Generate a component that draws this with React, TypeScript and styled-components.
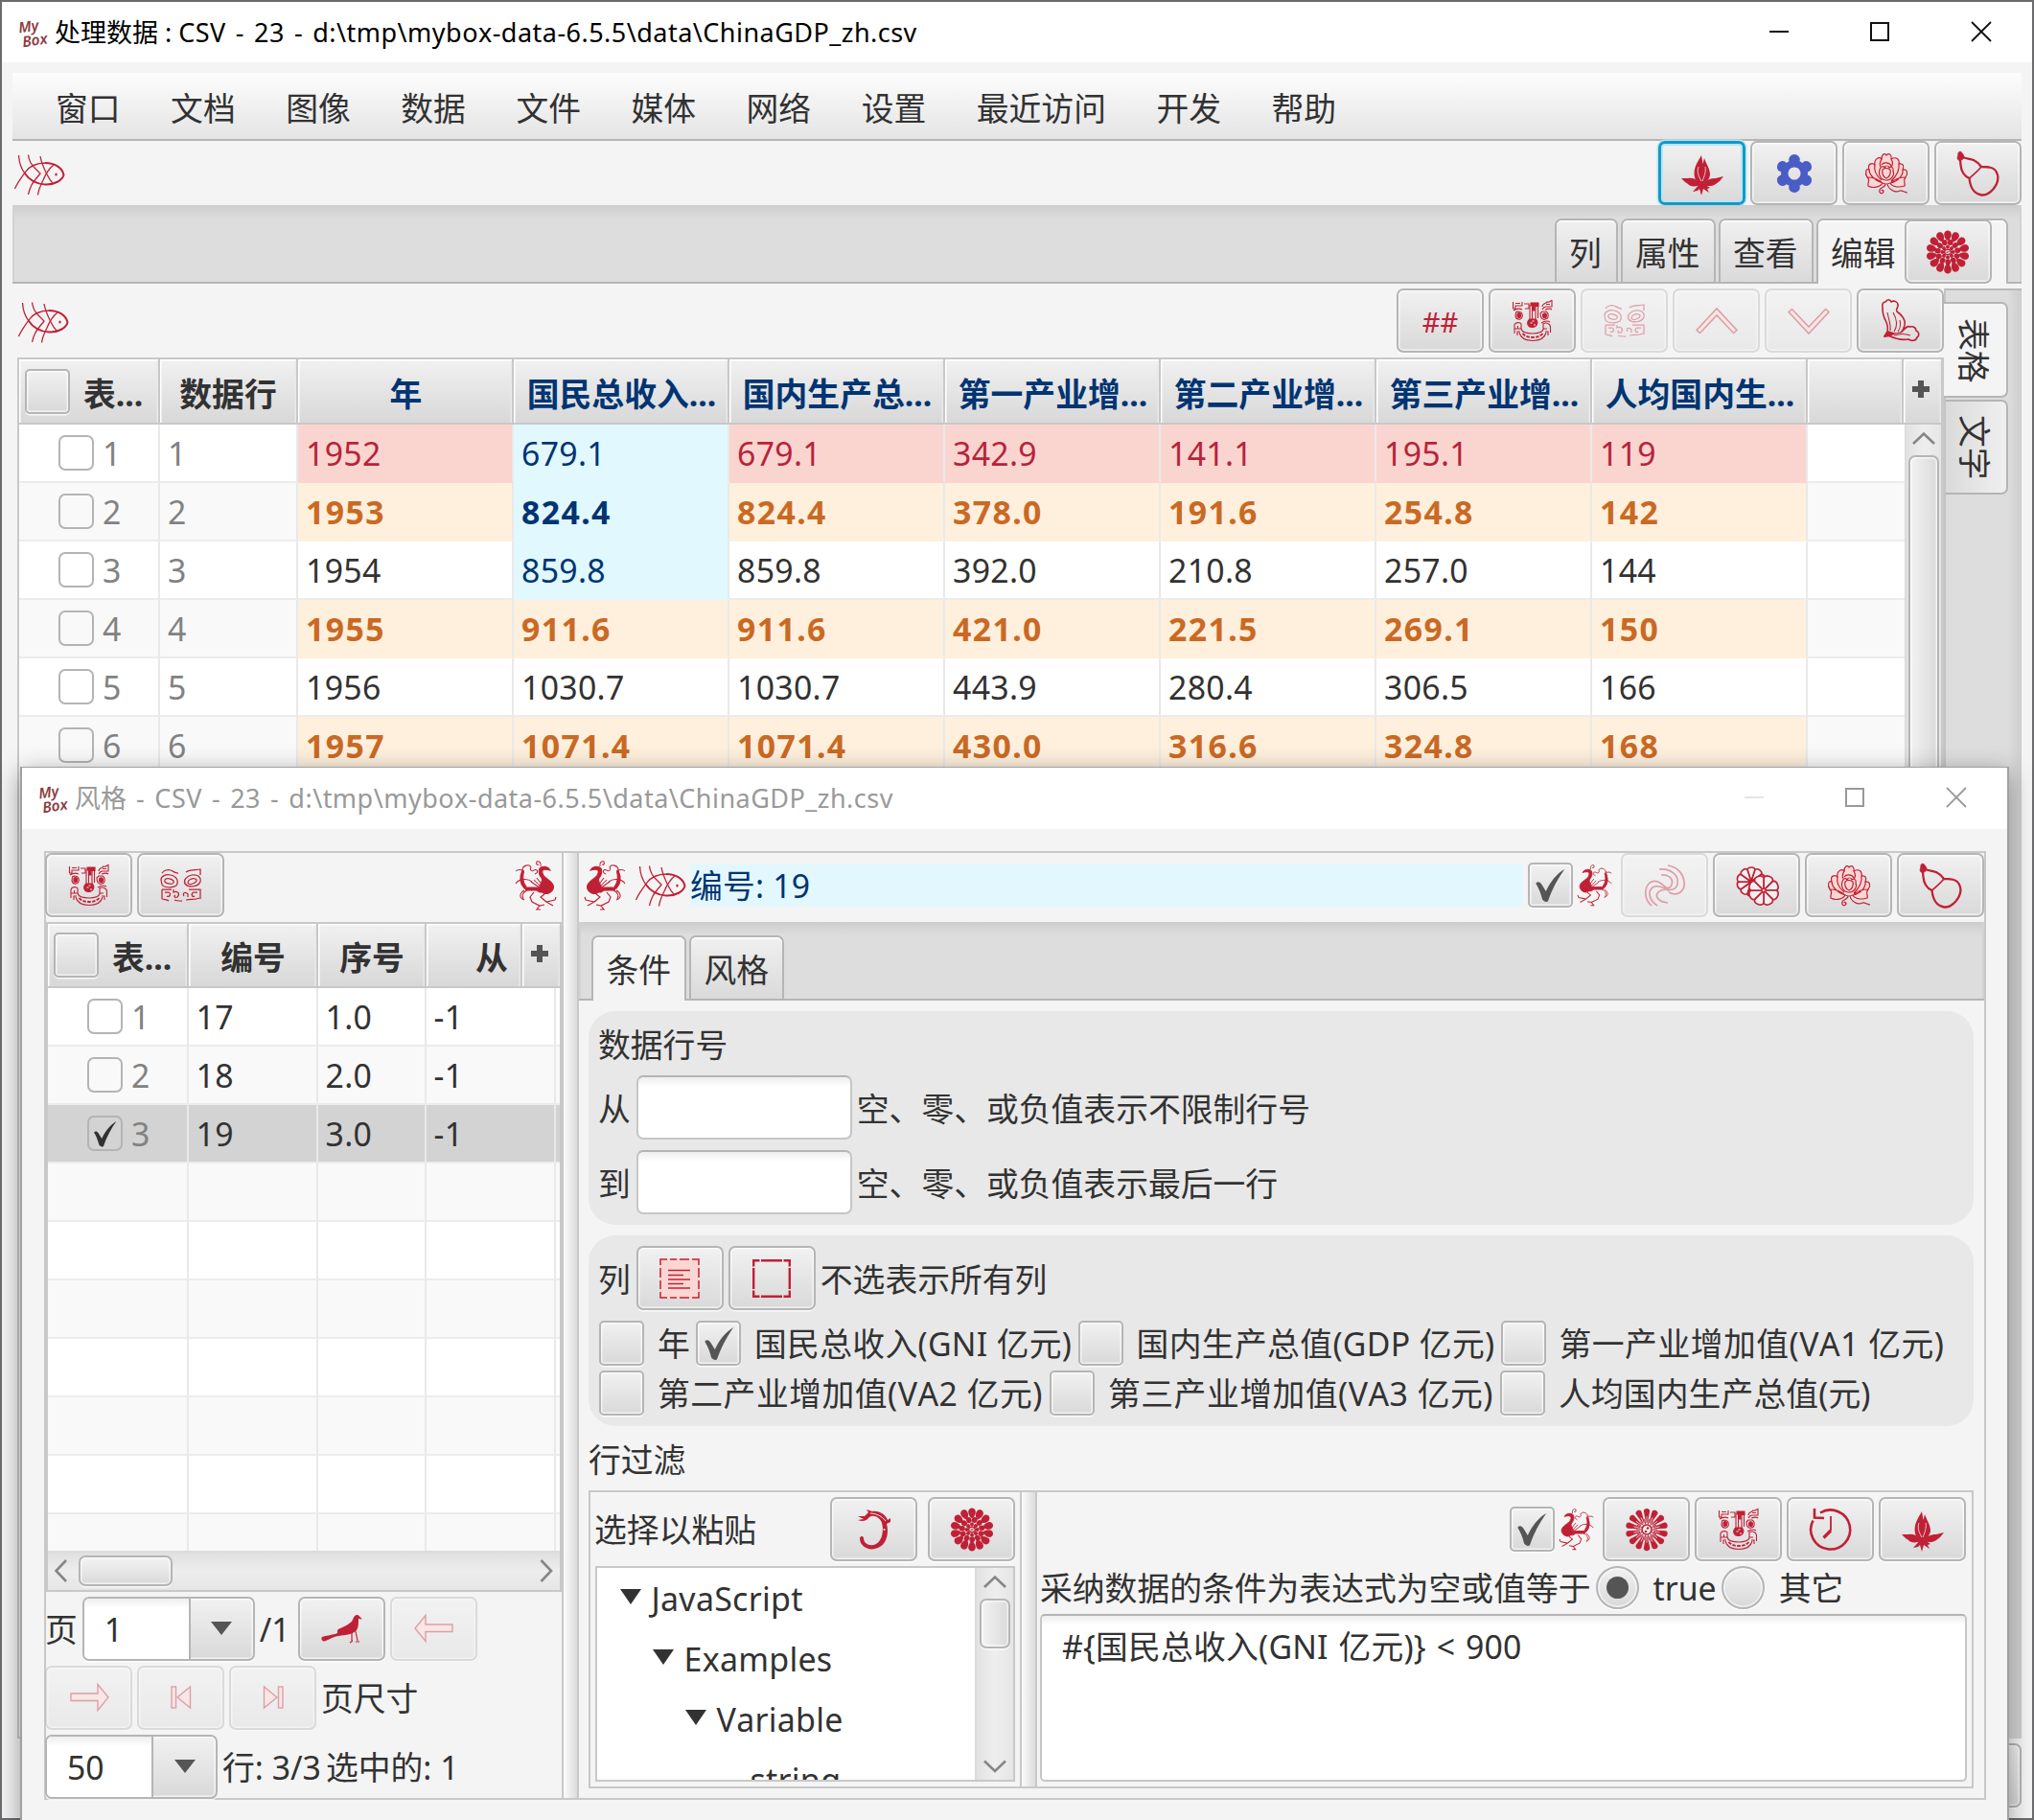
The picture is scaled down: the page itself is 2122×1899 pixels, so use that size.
import React from "react";
import styled, { createGlobalStyle, css } from "styled-components";

const RED = "#c02035";
const PINK = "#fcd6d2";
const INK = "#323232";
const LINE = "#c8c8c8";
const NAVY = "#003472";

const GlobalStyle = createGlobalStyle`
  * { box-sizing: border-box; }
  body {
    margin: 0;
    font-family: "Noto Sans", "Noto Sans CJK SC", sans-serif;
    font-size: 33.8px;
    line-height: 1;
    font-kerning: none;
    color: ${INK};
    white-space: nowrap;
  }
`;

/* ---------- icons ---------- */

const ring = (n: number, f: (angle: number, i: number) => React.ReactNode, start = 0) =>
  Array.from({ length: n }, (_, i) => f(start + (360 / n) * i, i));

const shapes: Record<string, { w: number; h: number; body: React.ReactNode }> = {
  fish: {
    w: 52, h: 43,
    body: (
      <g fill="none" stroke={RED} strokeWidth="1.3">
        <path d="M4.500 1 C5 9 7 15 11 20" />
        <path d="M0.500 36 C3 30 7 25 11 19 C15 13 22 9 33 9" />
        <path d="M10.500 19.500 C15 26 22 31 32 31.500 C42 32 50 27 51.500 21.500 C50 14 42 9 32 9" strokeWidth="2" />
        <path d="M14.500 0.500 C15 6 17 10 21 14 C23 16 25 18 27 20 C24 24 20 28 18 32 C16 36 15 39 14.500 42" />
        <path d="M27 2 C28 8 31 15 34 21 C36 25 38 28 40 30" />
        <path d="M41 11 C36 15 32 22 30 27 C27 33 25 38 24.500 42.500" />
        <ellipse cx="43.500" cy="21" rx="1.200" ry="1.600" fill={RED} stroke="none" />
      </g>
    ),
  },
  leaf: {
    w: 46, h: 46,
    body: (
      <g fill={RED}>
        <path d="M22 4 C18 11 13 18 15 27 C16 31 20 33 22 34 C27 33 31 28 31 24 C31 18 27 13 25 7 L23.500 13 Z" />
        <path d="M1 28 L8 28 C14 27 19 30 22 35 C16 37 10 37 8 34 L5 32 Z" />
        <path d="M45 26 L37 28 C31 28 26 30 23 35 C29 37 35 36 37 34 L41 31 Z" />
        <path d="M22 32 L13 42 L18 41 L20 39 L22 46 L24 39 L30 43 L28 39 L31 38 Z" />
        <path d="M19 16 C17 21 19 26 22 31 M26 16 C27 21 25 26 23 31" fill="none" stroke="#ececec" strokeWidth=".8" />
      </g>
    ),
  },
  gear: {
    w: 40, h: 42,
    body: (
      <g fill="#4a5cc6">
        <path fillRule="evenodd" d="M20 7 a14 14 0 1 0 .01 0 Z M20 14.500 a6.500 6.500 0 1 1 -.01 0 Z" />
        {ring(6, (a) => (
          <ellipse key={a} cx="20" cy="6.500" rx="5.800" ry="5.400" transform={`rotate(${a} 20 21)`} />
        ))}
      </g>
    ),
  },
  lotus: {
    w: 46, h: 46,
    body: (
      <g fill={PINK} stroke={RED} strokeWidth="1.2" strokeLinejoin="round">
        <path d="M3 27 C0 22 2 17 5 19 C3 13 8 11 11 14 C10 8 15 5 18 8 C18 3 21 1 23 4 C26 1 29 4 28 8 C33 5 37 8 36 13 C40 12 42 15 40 19 C45 18 46 23 43 27 C40 30 43 33 42 36 C36 38 29 37 27 33 C25 34 21 34 19 33 C17 37 9 39 4 36 C3 32 7 30 3 27 Z" />
        <path d="M19 33 C10 30 5 24 5 19 M18 30 C11 24 10 18 11 14 M17 16 C15 12 17 10 18 8 M28 31 C35 24 37 19 36 13 M27 33 C36 31 41 24 40 19 M28 16 C31 13 29 10 28 8 M18 32 C13 28 8 27 3 27 M28 32 C33 28 38 27 43 27" fill="none" />
        <path d="M16 19 C17 15 20 15 21 17 C22 14 25 14 26 17 C28 15 31 17 30 20 C32 25 28 30 23 30 C18 30 14 25 16 19 Z" />
        <path d="M19 19 C18 23 20 27 23 28 C26 27 28 23 27 19 C24 17 21 17 19 19 Z M18 14 C20 11 26 11 28 15" />
        <path d="M22 34 C22 37 17 38 16 40 C15 44 19 45 20 42 C20 40 18 40 18 41 M24 34 C25 39 32 44 37 41 C39 40 42 43 45 43" fill="none" />
      </g>
    ),
  },
  gourd: {
    w: 46, h: 46,
    body: (
      <g fill="none" stroke={RED} strokeWidth="2.3" strokeLinejoin="round">
        <path d="M3.500 4 C8 8 13 7 18 9 C22 11 24 13 26 16 C32 16 40 16 42 22 C46 29 41 39 33 44 C28 47 22 45 19 42 C15 38 14 33 13.500 28 C9 26 5 21 4.500 14 Z" />
        <path d="M13.500 28 C17 25 22 21 26 16" strokeWidth="1.700" />
        <path d="M2 4 C1 0 5 -1 6 2 C9 5 8 8 5 9 C2 10 0 8 2 4 Z" fill={RED} strokeWidth="1" />
      </g>
    ),
  },
  mum: {
    w: 46, h: 46,
    body: (
      <g fill={RED}>
        {ring(14, (a) => (
          <path key={`a${a}`} d="M23 11.500 C20 9 18.800 6 19.300 3.500 C20.300 -0.500 25.700 -0.500 26.700 3.500 C27.200 6 26 9 23 11.500 Z" transform={`rotate(${a} 23 23)`} />
        ))}
        {ring(11, (a) => (
          <ellipse key={`b${a}`} cx="23" cy="12.600" rx="2.800" ry="3.100" transform={`rotate(${a} 23 23)`} />
        ), 15)}
        {ring(8, (a) => (
          <ellipse key={`c${a}`} cx="23" cy="17.400" rx="2" ry="2" transform={`rotate(${a} 23 23)`} />
        ))}
        <ellipse cx="23" cy="23" rx="3.400" ry="2.700" fill="none" stroke={RED} strokeWidth="1.400" />
        <path d="M21.500 23.500 L24.500 22.500" stroke={RED} strokeWidth="1.200" />
      </g>
    ),
  },
  taotie: {
    w: 42, h: 43,
    body: (
      <g fill="none" stroke={RED} strokeWidth="1.1">
        <path d="M0.500 2 V9 H3 V6 H10 V2 M3 3.500 H8 M1 11 C4 9 8 9 10 10 M12 4 H17 V9 H13 M31 7 C31 3 35 4 36 2 C38 3 39 1 41 0.500 V7 H35 C33 7 32 8 31 10 M35 4.500 H39 M34 10 C37 9 40 9 41 10" />
        <path d="M18 5 V21 M20.500 6 V20 M24 4 V20 M26.500 5 V19" />
        <path d="M19 3 H27 V6.500 H23 V11 H20.500 V6 H19 Z" fill={RED} />
        <path d="M18 20 C14 23 15.500 28.500 20.500 28.500 C26 28.500 27 23 24.500 20 Z" fill={RED} />
        <path d="M18.500 24 h2 M22 26 h2 M20.500 22 h2" stroke="#eee" />
        <path d="M3.500 13 C5 11.500 9 12 9.800 14 C11 17 10 19.500 8 20 C5 20.500 3.500 19 3 17 Z M29 14 L31 12 H35 C37 13 38 16 36.500 19 L33 20.500 C30 20 29 17 29 14 Z" />
        <ellipse cx="6.800" cy="16" rx="2" ry="2.500" fill={RED} />
        <ellipse cx="33.500" cy="16.200" rx="2" ry="2.500" fill={RED} />
        <path d="M2 35 V26 C3 23 8 23 9 25 V30 H5.500 V27 M2 30 H5 M5 37 V33 H8 M39.500 34 V28 C39 24 34 23 32 25 V30 H36 M39 23 C36 21 33 22 30 24 M37 37 V33 H34" />
        <path d="M9 30 C10 34 15 35 21 35 C27 35 31 34 32.500 30 M7 34 C8.500 40 14 42.500 21 42.500 C28 42.500 33.500 40 35 34" />
        <path d="M10.500 35 C14 38.500 17 39 21 39 C25 39 28 38.500 31.500 35" strokeWidth="1.800" strokeDasharray="3.500 1.400" />
      </g>
    ),
  },
  mask: {
    w: 43, h: 35,
    body: (
      <g fill="none" stroke={RED} strokeWidth="1.25">
        <path d="M2 5 C4 2 8 1 11 2 C14 3 15 5 19 5 M27 4 C31 1 37 2 42 1 V7" />
        <path d="M1 12 C1 8 6 6 11 7 C17 8 20 13 17 18 C12 21 4 20 2 17 Z M26 16 C24 12 28 8 33 7 C39 6 43 9 42 14 C40 19 30 21 26 16 Z" />
        <path d="M5 12 C6 10 11 10 14 13 C15 15 13 17 10 16 C6 16 4 14 5 12 Z M29 15 C29 12 33 10 37 11 C39 12 38 15 34 16 C32 17 30 17 29 15 Z" />
        <path d="M2 22 V32 M2 22 H12 M5 25 H9 C12 26 10 31 7 29 M2 32 C5 33 7 32 9 34 M14 22 V25 C19 23 21 27 18 30 C15 31 14 29 16 28 M15 33 C17 34 21 34 23 34 M25 29 C23 26 26 24 29 27 V30 M30 22 H42 V32 M39 25 H35 C32 26 33 31 36 29 M27 33 C33 32 37 33 41 31" />
      </g>
    ),
  },
  up: {
    w: 46, h: 46,
    body: <path d="M2 32.500 L23 10 L44 32.500 L40.500 35.500 L23 17 L5.500 35.500 Z" fill={PINK} stroke={RED} strokeWidth="1.6" />,
  },
  down: {
    w: 46, h: 46,
    body: <path d="M2 13.500 L23 36 L44 13.500 L40.500 10.500 L23 29 L5.500 10.500 Z" fill={PINK} stroke={RED} strokeWidth="1.6" />,
  },
  butterfly: {
    w: 40, h: 44,
    body: (
      <g fill="none" stroke={RED} strokeWidth="1.6" strokeLinejoin="round">
        <path d="M6 33 C7 29 6 25 4 21 C1 16 1 12 1 8 C0 4 2 2 4 2 C6 -1 9 -1 10 2 C13 0 17 2 17 5 C18 8 14 9 16 12 C20 15 23 18 24 22 C25 26 23 30 21 33 C24 30 27 26 30 28 C33 27 36 29 36 32 C39 33 40 37 37 39 C36 43 31 43 28 41 C22 42 13 40 7 37 L3 38 Z" />
        <path d="M9 32 C10 25 7 19 6 13 M13 33 C17 27 16 20 12 13 M17 33 C20 29 20 25 19 21 M22 33 C18 35 14 35 11 35 M13 37 C19 35 25 35 30 37" strokeWidth="1.1" />
        <path d="M3 38 L7 33 L13 35 L8 37.500 Z" fill={RED} />
      </g>
    ),
  },
  phoenix: {
    w: 42, h: 52,
    body: (
      <g fill="none" stroke={RED} strokeWidth="1.05">
        <path d="M6 10 C8 6 14 5 17 8 C19 12 17 16 14.500 19 C14 22 16 24 17 27 C15 30 14 33 13 34 C8 36 2.500 32 2.500 27 C3 22 9 20 12.500 16 C14 14 15 12 13.500 9.500 C11 9 9 9 6 10 Z" fill={RED} />
        <path d="M14 26 L20 18 M15 28 L23 20 M16 29 L26 22" />
        <path d="M14 28 H33 L31 31 H20 L17 33 H12" fill={RED} />
        <path d="M16 6 C15 2 18 0 20 1 C21 3 20 5 18 4" />
        <path d="M22 14 C17 12 20 8 23 10 C25 12 28 9 26 7 C28 3 35 5 35 10 C39 9 41 10 42 11" />
        <path d="M35 10 C38 17 38 24 33 29 L31 27 C35 22 35 17 33.500 11 Z" fill={RED} />
        <path d="M25 22 C30 18 39 19 42 24 M33 31 C38 34 39 39 33 41 M30 31 C35 33 36 37 34 40" />
        <path d="M12 35 L16 38 L10 43 L1 41 M10 43 L3 47 M1 41 L0 38 M23 33 L27 38 L25 43 L17 47 L12 46 M17 47 L20 51 H16" strokeWidth="1.2" />
      </g>
    ),
  },
  swirl: {
    w: 44, h: 44,
    body: (
      <g fill="none" stroke={RED} strokeWidth="1.7">
        <path d="M25 1 C37 3 43 12 42 23 C40 30 33 33 26 29 M16 5 C28 4 37 11 35 21 C33 26 29 27 25 26 M18 11 C26 10 31 15 29 21 C28 24 26 25 23 24" />
        <path d="M8 43 C0 36 0 25 6 19 C13 14 21 21 26 28 M14 43 C5 37 4 28 9 24 C13 21 18 23 22 25 M25 40 C15 39 11 33 15 29 C18 26 21 26 24 26" />
      </g>
    ),
  },
  twin: {
    w: 44, h: 42,
    body: (
      <g fill="#efefef" stroke={RED} strokeWidth="1.7">
        {ring(10, (a) => (
          <path key={`a${a}`} d="M16 17 L12 5 C12 1 20 1 20 5 Z" transform={`rotate(${a} 16 17)`} />
        ))}
        <circle cx="29" cy="26" r="14" stroke="none" />
        {ring(8, (a) => (
          <path key={`b${a}`} d="M29 26 L24 14 C24 9 34 9 34 14 Z" transform={`rotate(${a + 22.5} 29 26)`} />
        ))}
        <circle cx="29" cy="26" r="1.800" fill={PINK} strokeWidth="1" />
      </g>
    ),
  },
  selectAll: {
    w: 42, h: 42,
    body: (
      <g stroke={RED} strokeWidth="1.4">
        <path d="M0 0 H42 V42 H0 Z" fill={PINK} stroke="none" />
        <path d="M1 7 V1 H8 M11 1 H18 M21 1 H31 M34 1 H41 V7 M41 10 V20 M41 23 V32 M41 35 V41 H34 M31 41 H21 M18 41 H11 M8 41 H1 V35 M1 32 V23 M1 20 V10" fill="none" strokeWidth="1.5" />
        <path d="M9 12.500 H32 M9 17.500 H25 M9 22 H32 M9 26.500 H25 M9 31 H32" fill="none" />
      </g>
    ),
  },
  selectNone: {
    w: 40, h: 40,
    body: (
      <g fill="none" stroke={RED} strokeWidth="2.4">
        <path d="M1.200 7.500 V1.200 H7.500 M9 1.200 H31 M32.500 1.200 H38.800 V7.500 M38.800 9 V31 M38.800 32.500 V38.800 H32.500 M31 38.800 H9 M7.500 38.800 H1.200 V32.500 M1.200 31 V9" />
      </g>
    ),
  },
  bird: {
    w: 44, h: 31,
    body: (
      <g fill={RED}>
        <path d="M1 24 C8 22 12 22 17 20 C17 17 17 16 20 15 C26 12 31 10 33 6 C34 2 37 0 39 1.500 L43 5.500 L39 5 C39 9 39 14 37 17 C34 21 26 22 18 23 C11 24 7 28 3 28.500 C0 28 0 25 1 24 Z" />
        <path d="M32 19 V28 M36 18 L38 28 M30 30 L33 28 M36 29 H40" stroke={RED} strokeWidth="1.2" fill="none" />
      </g>
    ),
  },
  left: {
    w: 42, h: 30,
    body: <path d="M1 15 L12 1.500 V11 H40 V18.500 H12 V28.500 Z" fill={PINK} stroke={RED} strokeWidth="1.4" />,
  },
  right: {
    w: 42, h: 30,
    body: <path d="M41 15 L30 1.500 V11 H2 V18.500 H30 V28.500 Z" fill={PINK} stroke={RED} strokeWidth="1.4" />,
  },
  first: {
    w: 22, h: 24,
    body: (
      <g fill={PINK} stroke={RED} strokeWidth="1.4">
        <rect x="1" y="1" width="4.500" height="22" />
        <path d="M20.500 1 V23 L7 12 Z" />
      </g>
    ),
  },
  last: {
    w: 22, h: 24,
    body: (
      <g fill={PINK} stroke={RED} strokeWidth="1.4">
        <rect x="16.500" y="1" width="4.500" height="22" />
        <path d="M1.500 1 V23 L15 12 Z" />
      </g>
    ),
  },
  dragon: {
    w: 36, h: 43,
    body: (
      <g fill={RED}>
        <path d="M1 12 L7 11 L1 8 L8 8 L12 4 L10 1 L16 3 C24 2 30 7 32 12 L35 10 V14 L31 16 C34 27 30 38 22 41 C13 45 3 40 3 31 C4 28 7 29 7 31 C7 37 14 40 20 37 C27 33 28 22 26 15 C24 9 17 6 13 9 C10 13 6 14 1 12 Z" />
        <path d="M14 5 C20 5 26 8 30 13" fill="none" stroke="#eee" strokeWidth="1" />
        <circle cx="28.500" cy="22" r="1" fill="#eee" />
      </g>
    ),
  },
  daisy: {
    w: 46, h: 46,
    body: (
      <g fill={RED}>
        {ring(14, (a) => (
          <g key={a} transform={`rotate(${a} 23 23)`}>
            <path d="M22 15.500 L19.800 3.500 C20 0 26 0 26.200 3.500 L24 15.500 Z" />
            <path d="M23 15 V9" stroke="#eee" strokeWidth=".7" />
          </g>
        ))}
        {ring(14, (a) => (
          <path key={`s${a}`} d="M23 17.500 V12" stroke={RED} strokeWidth=".9" transform={`rotate(${a} 23 23)`} />
        ), 12.86)}
        <circle cx="23" cy="23" r="5" fill="#eee" stroke={RED} strokeWidth="1.6" />
        <circle cx="24" cy="21.500" r="1.300" />
        <circle cx="22" cy="25" r="1.300" />
      </g>
    ),
  },
  history: {
    w: 46, h: 46,
    body: (
      <g fill="none" stroke={RED} strokeWidth="2.600">
        <path d="M4.500 13.500 A20.500 20.500 0 1 0 12 5.500" />
        <path d="M6 1 V10.500 L16 11" />
        <path d="M23 9 V24" strokeWidth="1.800" />
        <path d="M23 24 L15.500 31.500" strokeWidth="3.200" />
      </g>
    ),
  },
};

const Drawing = styled.svg`
  display: block;
  flex: none;
  overflow: visible;
`;

const Icon = ({ name, scale = 1, flip }: { name: string; scale?: number; flip?: boolean }) => {
  const s = shapes[name];
  return (
    <Drawing width={s.w * scale} height={s.h * scale} viewBox={`0 0 ${s.w} ${s.h}`} preserveAspectRatio="none">
      {flip ? <g transform={`translate(${s.w} 0) scale(-1 1)`}>{s.body}</g> : s.body}
    </Drawing>
  );
};

/* ---------- shared controls ---------- */

const raised = css`
  background: linear-gradient(#f1f1f1, #d9d9d9);
  border: 2px solid #b5b5b5;
  border-radius: 7px;
  box-shadow: inset 0 0 0 1.5px rgba(255, 255, 255, 0.65), 0 1.5px 0 rgba(255, 255, 255, 0.8);
`;

const ToolButton = styled.button<{ $focus?: boolean }>`
  ${raised}
  flex: none;
  display: flex;
  align-items: center;
  justify-content: center;
  width: 91px;
  height: 67px;
  padding: 0;
  font: inherit;
  color: ${RED};
  &:disabled { opacity: 0.4; }
  ${(p) =>
    p.$focus &&
    css`
      border: 3px solid #1399c6;
      box-shadow: inset 0 0 0 2px #b9e6f2, 0 0 0 1.5px #b9e6f2;
    `}
`;

const HashLabel = styled.span`
  padding-top: 1px;
  font-size: 29px;
`;

const Tool = ({ icon, disabled, focus }: { icon: string; disabled?: boolean; focus?: boolean }) => (
  <ToolButton disabled={disabled} $focus={focus}>
    <Icon name={icon} />
  </ToolButton>
);

const Caption = styled.span<{ $after?: number }>`
  flex: none;
  padding-top: 3px;
  padding-right: ${(p) => p.$after ?? 0}px;
`;

const Box = styled.span`
  ${raised}
  border-radius: 5px;
  flex: none;
  display: flex;
  align-items: center;
  justify-content: center;
  width: 47px;
  height: 47px;
`;

const CellBox = styled.span`
  flex: none;
  display: flex;
  align-items: center;
  justify-content: center;
  width: 37px;
  height: 37px;
  margin-top: -3px;
  border: 2px solid #b4b4b4;
  border-radius: 7px;
`;

const Tick = ({ size = 32, color = "#555" }: { size?: number; color?: string }) => (
  <Drawing width={size} height={size * 1.05} viewBox="0 0 30 32">
    <path d="M1 14 C4 11 6 13 11 22 C15 13 22 4 29.500 0 C23 9 17 20 13 32 C11 33 9 32 7.500 30 C6 24 4 19 1 14 Z" fill={color} />
  </Drawing>
);

const Check = ({ on }: { on?: boolean }) => <Box>{on && <Tick />}</Box>;

const Radio = styled.span<{ $on?: boolean }>`
  ${raised}
  flex: none;
  width: 45px;
  height: 45px;
  border-radius: 50%;
  display: flex;
  align-items: center;
  justify-content: center;
  &::after {
    content: "";
    width: 23px;
    height: 23px;
    border-radius: 50%;
    background: ${(p) => (p.$on ? "#555" : "transparent")};
  }
`;

/* ---------- windows ---------- */

const Desktop = styled.div`
  position: relative;
  width: 2122px;
  height: 1899px;
  padding: 2px;
  overflow: hidden;
  background: #6b6a6c;
`;

const MainWindow = styled.div`
  display: flex;
  flex-direction: column;
  height: 1895px;
  background: #f4f4f4;
`;

const DialogWindow = styled.div`
  position: absolute;
  left: 21px;
  top: 800px;
  width: 2075px;
  height: 1110px;
  display: flex;
  flex-direction: column;
  border: 2px solid #a0a0a0;
  border-top-width: 1px;
  background: #f4f4f4;
  box-shadow: 0 6px 24px rgba(0, 0, 0, 0.38);
`;

const TitleBar = styled.div<{ $inactive?: boolean }>`
  flex: none;
  display: flex;
  align-items: center;
  height: ${(p) => (p.$inactive ? 64 : 63)}px;
  padding-left: 18px;
  background: #fff;
  font-size: 27px;
  color: ${(p) => (p.$inactive ? "#999" : "#000")};
`;

const Logo = styled.span`
  flex: none;
  display: flex;
  flex-direction: column;
  width: 37px;
  font: italic 600 15.5px/15px "Noto Sans", sans-serif;
  color: #8d3b40;
  transform: rotate(-8deg);
  & > span + span { padding-left: 2px; }
`;

const TitleText = styled.span`
  flex: 1;
  display: flex;
  white-space: pre;
  padding-bottom: 1px;
`;

const TitlePath = styled.span`
  letter-spacing: 0.47px;
  word-spacing: 2.6px;
`;

const WindowButton = styled.span`
  width: 106px;
  display: flex;
  justify-content: center;
`;

const WindowButtons = ({ color, minColor }: { color: string; minColor: string }) => (
  <>
    <WindowButton>
      <Drawing width="20" height="20" viewBox="0 0 20 20"><path d="M1 9 H21" stroke={minColor} strokeWidth="2" /></Drawing>
    </WindowButton>
    <WindowButton>
      <Drawing width="20" height="20" viewBox="0 0 20 20"><rect x="1" y="0" width="18" height="18" fill="none" stroke={color} strokeWidth="2" /></Drawing>
    </WindowButton>
    <WindowButton>
      <Drawing width="20" height="20" viewBox="0 0 20 20"><path d="M0 -1 L20 19 M20 -1 L0 19" stroke={color} strokeWidth="1.8" /></Drawing>
    </WindowButton>
  </>
);

const MainBody = styled.div`
  flex: 1;
  min-height: 0;
  display: flex;
  flex-direction: column;
  padding: 11px 11px 11px 11px;
`;

const MenuBar = styled.div`
  flex: none;
  display: flex;
  align-items: center;
  gap: 52.5px;
  height: 71px;
  padding: 6px 0 0 45px;
  border-bottom: 2px solid #b5b5b5;
  background: linear-gradient(#fdfdfd, #e4e4e4);
`;

const ToolRow = styled.div<{ $h: number; $top: number; $left: number }>`
  flex: none;
  display: flex;
  align-items: flex-start;
  gap: 5px;
  height: ${(p) => p.$h}px;
  padding-top: ${(p) => p.$top}px;
  padding-left: ${(p) => p.$left}px;
`;

const StyleTools = styled(ToolRow)`
  margin-left: -1px;
`;

const Spacer = styled.span`
  flex: 1;
`;

const Gap = styled.span<{ $w: number }>`
  flex: none;
  width: ${(p) => p.$w}px;
`;

const Drop = styled.span<{ $y: number }>`
  flex: none;
  margin-top: ${(p) => p.$y}px;
`;

const TabStrip = styled.div<{ $end?: boolean }>`
  flex: none;
  display: flex;
  align-items: flex-end;
  justify-content: ${(p) => (p.$end ? "flex-end" : "flex-start")};
  gap: 3px;
  height: 82px;
  padding: 0 14.5px 0 13px;
  border-bottom: 2px solid #b5b5b5;
  background: linear-gradient(#cdcdcd, #ddd 14px);
  box-shadow: inset 2px 0 0 #d2d2d2, inset -2px 0 0 #d2d2d2;
`;

const Tab = styled.div<{ $w: number; $active?: boolean }>`
  display: flex;
  align-items: center;
  width: ${(p) => p.$w}px;
  height: ${(p) => (p.$active ? 68 : 66)}px;
  margin-bottom: ${(p) => (p.$active ? -2 : 0)}px;
  padding: ${(p) => (p.$active ? 3 : 5)}px 0 0 13.5px;
  border: 2px solid #b5b5b5;
  border-bottom: 0;
  border-radius: 7px 7px 0 0;
  background: ${(p) => (p.$active ? "#f4f4f4" : "linear-gradient(#f0f0f0, #dadada)")};
  box-shadow: inset 0 1.5px 0 #fff;
`;

const TabAction = styled.div`
  flex: none;
  margin: -4px 0 0 9px;
`;

const Columns = styled.div`
  flex: none;
  display: flex;
  height: 1518px;
`;

const MainPane = styled.div`
  width: 2015px;
  display: flex;
  flex-direction: column;
`;

const SideTabs = styled.div`
  flex: 1;
  display: flex;
  flex-direction: column;
  gap: 2px;
  margin-top: 5px;
  padding: 12px 14px 0 0;
  border-top: 2px solid #b9b9b9;
  border-left: 2px solid #c4c4c4;
  background: linear-gradient(to left, #cdcdcd, #ddd 14px);
`;

const SideTab = styled.div<{ $active?: boolean }>`
  height: 99.500px;
  margin-left: ${(p) => (p.$active ? -2 : 0)}px;
  padding: 2px 4px 0 0;
  display: flex;
  align-items: center;
  justify-content: center;
  writing-mode: vertical-rl;
  text-orientation: sideways;
  border: 2px solid #b5b5b5;
  border-left: 0;
  border-radius: 0 7px 7px 0;
  background: ${(p) => (p.$active ? "#f4f4f4" : "linear-gradient(to left, #f0f0f0, #dadada)")};
`;

/* ---------- tables ---------- */

const Table = styled.div<{ $edge: number }>`
  display: flex;
  flex-direction: column;
  border: 2px solid ${LINE};
  border-right-width: ${(p) => p.$edge}px;
  background: #fff;
`;

const HeadRow = styled.div<{ $h: number }>`
  flex: none;
  display: flex;
  height: ${(p) => p.$h}px;
  border-bottom: 2px solid ${LINE};
  background: linear-gradient(#f1f1f1, #d8d8d8);
`;

const HeadCell = styled.div<{ $w: number; $navy?: boolean; $shift?: number }>`
  flex: none;
  display: flex;
  align-items: center;
  justify-content: center;
  overflow: hidden;
  width: ${(p) => p.$w}px;
  padding: 7px 0 0 ${(p) => p.$shift ?? 2}px;
  border-right: 2px solid ${LINE};
  box-shadow: inset 1.5px 1.5px 0 #fff, inset -1.5px 0 0 #e9e9e9;
  font-weight: 700;
  color: ${(p) => (p.$navy ? NAVY : INK)};
`;

const SelectHead = styled(HeadCell)`
  justify-content: flex-start;
  gap: 14px;
  padding: 0 0 0 6px;
  & > span + span { padding-top: 7px; }
`;

const PlusCell = styled.div`
  flex: 1;
  display: flex;
  align-items: center;
  justify-content: center;
  padding: 0 3px 4px 0;
  box-shadow: inset 1.5px 1.5px 0 #fff, inset -1.5px 0 0 #e9e9e9;
`;

const Plus = () => (
  <PlusCell>
    <Drawing width="18" height="18" viewBox="0 0 18 18"><path d="M9 0 V18 M0 9 H18" stroke="#555" strokeWidth="6" /></Drawing>
  </PlusCell>
);

const TableBody = styled.div`
  flex: 1;
  min-height: 0;
  display: flex;
  overflow: hidden;
`;

const Rows = styled.div<{ $w: number }>`
  flex: none;
  width: ${(p) => p.$w}px;
  overflow: hidden;
`;

const Row = styled.div<{ $stripe?: boolean; $selected?: boolean }>`
  display: flex;
  height: 61px;
  background: ${(p) => (p.$selected ? "#d3d3d3" : p.$stripe ? "#f9f9f9" : "#fff")};
`;

type Tone = "plain" | "red" | "orange" | "blue" | "blueBold" | "muted";
const tones: Record<Tone, { bg?: string; fg: string; bold?: boolean }> = {
  plain: { fg: INK },
  muted: { fg: "#828282" },
  red: { bg: "#fad5d0", fg: "#b8233a" },
  orange: { bg: "#fef0dd", fg: "#ca6924", bold: true },
  blue: { bg: "#e1f8fe", fg: NAVY },
  blueBold: { bg: "#e1f8fe", fg: NAVY, bold: true },
};

const Cell = styled.div<{ $w: number; $tone: Tone }>`
  flex: none;
  display: flex;
  align-items: center;
  gap: 9px;
  width: ${(p) => p.$w}px;
  padding: 3.5px 0 0 8px;
  border-right: 2px solid #e9e9e9;
  border-bottom: 2px solid ${(p) => tones[p.$tone].bg ?? "#ececec"};
  background: ${(p) => tones[p.$tone].bg ?? "transparent"};
  background-clip: padding-box;
  color: ${(p) => tones[p.$tone].fg};
  font-weight: ${(p) => (tones[p.$tone].bold ? 700 : 400)};
  letter-spacing: ${(p) => (tones[p.$tone].bold ? 1.4 : 0.3)}px;
`;

const SelectCell = styled(Cell)`
  padding-left: 41px;
`;

const Filler = styled.div`
  flex: 1;
  border-bottom: 2px solid #ececec;
`;

const VScroll = styled.div<{ $w: number }>`
  width: ${(p) => p.$w}px;
  flex: none;
  display: flex;
  flex-direction: column;
  align-items: center;
  border-left: 2px solid #dcdcdc;
  background: linear-gradient(to right, #e2e2e2, #eee, #e6e6e6);
`;

const VThumb = styled.div<{ $h?: number }>`
  ${raised}
  flex: ${(p) => (p.$h ? `0 0 ${p.$h}px` : 1)};
  width: 32px;
  background: linear-gradient(to right, #f3f3f3, #dadada);
`;

const HScroll = styled.div`
  flex: none;
  display: flex;
  align-items: center;
  height: 41px;
  padding: 0 8px 2px 7px;
  border-top: 2px solid #dcdcdc;
  background: linear-gradient(#e0e0e0, #ededed, #e6e6e6);
`;

const HThumb = styled.div`
  ${raised}
  width: 98px;
  height: 32px;
  margin-left: 12px;
  background: linear-gradient(#f3f3f3, #dadada);
`;

const ArrowSlot = styled.div<{ $h: number; $below?: number }>`
  flex: none;
  height: ${(p) => p.$h}px;
  display: flex;
  align-items: center;
  padding-bottom: ${(p) => p.$below ?? 4}px;
`;

const Chevron = ({ dir }: { dir: "up" | "down" | "left" | "right" }) => {
  const d = {
    up: "M1 12 L12 1.500 L23 12",
    down: "M1 1.500 L12 12 L23 1.500",
    left: "M12 1 L1.500 12 L12 23",
    right: "M1.500 1 L12 12 L1.500 23",
  }[dir];
  const tall = dir === "left" || dir === "right";
  const w = tall ? 13 : 24;
  const h = tall ? 24 : 13;
  return (
    <Drawing width={w} height={h} viewBox={`0 0 ${w} ${h}`}>
      <path d={d} fill="none" stroke="#868686" strokeWidth="2.600" />
    </Drawing>
  );
};

/* ---------- dialog parts ---------- */

const DialogBody = styled.div`
  padding: 23px 22px 0 23px;
`;

const SplitPane = styled.div<{ $h: number }>`
  display: flex;
  height: ${(p) => p.$h}px;
  border: 2px solid ${LINE};
`;

const Divider = styled.div<{ $w: number }>`
  flex: none;
  width: ${(p) => p.$w}px;
  border: 2px solid ${LINE};
  border-width: 0 2px;
  background: linear-gradient(to right, #fbfbfb, #dcdcdc);
`;

const Pane = styled.div<{ $w?: number }>`
  display: flex;
  flex-direction: column;
  ${(p) => (p.$w ? `flex: none; width: ${p.$w}px;` : "flex: 1; min-width: 0;")}
`;

const RecordLabel = styled.div`
  flex: 1;
  height: 45px;
  margin: 11px 0 0 0;
  padding-top: 3px;
  display: flex;
  align-items: center;
  background: #e3f8fe;
  color: ${NAVY};
  letter-spacing: 0.2px;
`;

const Pager = styled.div`
  display: flex;
  flex-direction: column;
  gap: 6px;
  padding-top: 5px;
  margin-left: -1px;
`;

const PagerRow = styled.div`
  display: flex;
  align-items: center;
  gap: 5px;
  height: 66px;
`;

const Combo = styled.div`
  ${raised}
  flex: none;
  display: flex;
  width: 180px;
  height: 67px;
  overflow: hidden;
`;

const ComboValue = styled.span`
  flex: 1;
  display: flex;
  align-items: center;
  padding: 3px 0 0 21px;
  background: linear-gradient(#eee, #fff 10px);
`;

const ComboArrow = styled.span`
  width: 67px;
  display: flex;
  align-items: center;
  justify-content: center;
  border-left: 2px solid #b5b5b5;
`;

const Triangle = styled.i<{ $small?: boolean }>`
  flex: none;
  width: 0;
  height: 0;
  border: 11.5px solid transparent;
  border-top: ${(p) => (p.$small ? "14px solid #555" : `16px solid ${INK}`)};
  border-bottom: 0;
`;

const Picker = ({ value }: { value: string }) => (
  <Combo>
    <ComboValue>{value}</ComboValue>
    <ComboArrow><Triangle $small /></ComboArrow>
  </Combo>
);

const FormArea = styled.div`
  flex: 1;
  display: flex;
  flex-direction: column;
  padding: 11px 11px 10px 10px;
`;

const Group = styled.div<{ $h: number }>`
  flex: none;
  height: ${(p) => p.$h}px;
  margin-bottom: 11px;
  padding: 11px 11px 11px 10px;
  border-radius: 28px;
  background: #e8e8e8;
`;

const GroupTitle = styled.div`
  height: 56px;
  padding-top: 8px;
`;

const FormRow = styled.div<{ $gap: number }>`
  display: flex;
  align-items: center;
  gap: 5px;
  height: 67px;
  margin-bottom: ${(p) => p.$gap}px;
  & > span { padding-top: 4px; }
  & > span:first-child { margin-right: 1px; }
`;

const Field = styled.span`
  flex: none;
  width: 225px;
  height: 67px;
  border: 2px solid #c6c6c6;
  border-top-color: #b5b5b5;
  border-radius: 7px;
  background: linear-gradient(#eee, #fff 10px);
`;

const CheckRow = styled.div`
  display: flex;
  height: 52px;
  padding-left: 1px;
`;

const CheckItem = styled.span<{ $w: number; $spacing: number }>`
  flex: none;
  display: flex;
  gap: 14px;
  width: ${(p) => p.$w}px;
  letter-spacing: ${(p) => p.$spacing}px;
  & > span + span { padding-top: 8px; }
`;

const SectionLabel = styled.div`
  height: 56px;
  padding-top: 8px;
`;

const PasteHead = styled.div`
  display: flex;
  align-items: center;
  gap: 11px;
  height: 77px;
  padding: 0 5px 0 4px;
`;

const Tree = styled.div`
  flex: none;
  display: flex;
  width: 438px;
  height: 225px;
  margin-left: 5px;
  border: 2px solid ${LINE};
  background: #fff;
`;

const TreeRows = styled.div`
  flex: 1;
  overflow: hidden;
  font-size: 34px;
  letter-spacing: 0.25px;
`;

const TreeRow = styled.div<{ $level: number }>`
  display: flex;
  align-items: center;
  gap: 11px;
  height: 63px;
  padding: 1px 0 0 ${(p) => 23.5 + p.$level * 34}px;
  & > i { margin-bottom: 5px; }
`;

const FilterTools = styled.div`
  display: flex;
  align-items: center;
  justify-content: flex-end;
  gap: 5px;
  height: 77px;
  padding-right: 6px;
  & > svg { margin-right: 5px; }
`;

const ChoiceRow = styled.div`
  display: flex;
  align-items: center;
  gap: 5px;
  height: 45px;
  padding-left: 3px;
`;

const ChoiceLabel = styled(Caption)`
  padding-left: 10px;
`;

const Script = styled.div`
  height: 175px;
  margin: 5px 5px 0 3px;
  padding: 16px 21px;
  border: 2px solid #c6c6c6;
  border-top-color: #b5b5b5;
  border-radius: 5px;
  background: linear-gradient(#eee, #fff 10px);
  letter-spacing: 0.2px;
  word-spacing: 1.8px;
`;

const BottomTools = styled.div`
  display: flex;
  justify-content: flex-end;
  padding-top: 5px;
`;

/* ---------- data ---------- */

const menus = ["窗口", "文档", "图像", "数据", "文件", "媒体", "网络", "设置", "最近访问", "开发", "帮助"];
const headers = ["年", "国民总收入...", "国内生产总...", "第一产业增...", "第二产业增...", "第三产业增...", "人均国内生..."];
const records: { base: Tone; gni: Tone; values: string[] }[] = [
  { base: "red", gni: "blue", values: ["1952", "679.1", "679.1", "342.9", "141.1", "195.1", "119"] },
  { base: "orange", gni: "blueBold", values: ["1953", "824.4", "824.4", "378.0", "191.6", "254.8", "142"] },
  { base: "plain", gni: "blue", values: ["1954", "859.8", "859.8", "392.0", "210.8", "257.0", "144"] },
  { base: "orange", gni: "orange", values: ["1955", "911.6", "911.6", "421.0", "221.5", "269.1", "150"] },
  { base: "plain", gni: "plain", values: ["1956", "1030.7", "1030.7", "443.9", "280.4", "306.5", "166"] },
  { base: "orange", gni: "orange", values: ["1957", "1071.4", "1071.4", "430.0", "316.6", "324.8", "168"] },
];
const styleRows = [
  ["17", "1.0", "-1"],
  ["18", "2.0", "-1"],
  ["19", "3.0", "-1"],
];
const styleWidths = [135, 113, 135];
const columnChecks = [
  [
    { w: 101, label: "年", spacing: 0 },
    { w: 398.5, label: "国民总收入(GNI 亿元)", spacing: 0.3, on: true },
    { w: 441, label: "国内生产总值(GDP 亿元)", spacing: 0.35 },
    { w: 460, label: "第一产业增加值(VA1 亿元)", spacing: 0.5 },
  ],
  [
    { w: 470, label: "第二产业增加值(VA2 亿元)", spacing: 0.5 },
    { w: 470, label: "第三产业增加值(VA3 亿元)", spacing: 0.5 },
    { w: 460, label: "人均国内生产总值(元)", spacing: 0.1 },
  ],
];

const DataTable = () => (
  <Table $edge={3}>
    <HeadRow $h={68}>
      <SelectHead $w={147}><Check /><span>表...</span></SelectHead>
      <HeadCell $w={144} $shift={0}>数据行</HeadCell>
      {headers.map((h) => <HeadCell key={h} $w={225} $navy>{h}</HeadCell>)}
      <HeadCell $w={100} />
      <Plus />
    </HeadRow>
    <TableBody>
      <Rows $w={1967}>
        {records.map((r, i) => (
          <Row key={i} $stripe={i % 2 === 1}>
            <SelectCell $w={147} $tone="muted"><CellBox />{i + 1}</SelectCell>
            <Cell $w={144} $tone="muted">{i + 1}</Cell>
            {r.values.map((v, c) => (
              <Cell key={c} $w={225} $tone={c === 1 ? r.gni : r.base}>{v}</Cell>
            ))}
            <Filler />
          </Row>
        ))}
      </Rows>
      <VScroll $w={38}>
        <ArrowSlot $h={32}><Chevron dir="up" /></ArrowSlot>
        <VThumb />
      </VScroll>
    </TableBody>
  </Table>
);

const TableFrame = styled.div`
  flex: 1;
  min-height: 0;
  display: flex;
  flex-direction: column;
  padding-left: 5px;
  & > div { flex: 1; min-height: 0; }
`;

const StyleTableFrame = styled.div`
  flex: none;
  display: flex;
  flex-direction: column;
  height: 699px;
  & > div { flex: 1; min-height: 0; }
`;

const StyleTable = () => (
  <StyleTableFrame>
    <Table $edge={2}>
      <HeadRow $h={67}>
        <SelectHead $w={146.5}><Check /><span>表...</span></SelectHead>
        <HeadCell $w={135}>编号</HeadCell>
        <HeadCell $w={113}>序号</HeadCell>
        <HeadCell $w={100} $shift={39}>从</HeadCell>
        <Plus />
      </HeadRow>
      <TableBody>
        <Rows $w={534}>
          {Array.from({ length: 10 }, (_, i) => (
            <Row key={i} $stripe={i % 2 === 1} $selected={i === 2}>
              <SelectCell $w={146.5} $tone="muted">
                {i < 3 && <><CellBox>{i === 2 && <Tick size={25} color={INK} />}</CellBox>{i + 1}</>}
              </SelectCell>
              {styleWidths.map((w, c) => (
                <Cell key={c} $w={w} $tone="plain">{styleRows[i]?.[c]}</Cell>
              ))}
              <Filler />
            </Row>
          ))}
        </Rows>
      </TableBody>
      <HScroll>
        <Chevron dir="left" />
        <HThumb />
        <Spacer />
        <Chevron dir="right" />
      </HScroll>
    </Table>
  </StyleTableFrame>
);

const Main = () => (
  <MainWindow>
    <TitleBar>
      <Logo><span>My</span><span>Box</span></Logo>
      <TitleText>
        <span>{"处理数据 : "}</span>
        <TitlePath>CSV - 23 - d:\tmp\mybox-data-6.5.5\data\ChinaGDP_zh.csv</TitlePath>
      </TitleText>
      <WindowButtons color="#111" minColor="#111" />
    </TitleBar>
    <MainBody>
      <MenuBar>{menus.map((m) => <span key={m}>{m}</span>)}</MenuBar>
      <ToolRow $h={67} $top={0} $left={2}>
        <Drop $y={14}><Icon name="fish" /></Drop>
        <Spacer />
        <Tool icon="leaf" focus />
        <Tool icon="gear" />
        <Tool icon="lotus" />
        <Tool icon="gourd" />
      </ToolRow>
      <TabStrip $end>
        <Tab $w={66}>列</Tab>
        <Tab $w={99}>属性</Tab>
        <Tab $w={99}>查看</Tab>
        <Tab $w={200} $active>编辑<TabAction><Tool icon="mum" /></TabAction></Tab>
      </TabStrip>
      <Columns>
        <MainPane>
          <ToolRow $h={77} $top={5} $left={6}>
            <Drop $y={14}><Icon name="fish" /></Drop>
            <Spacer />
            <ToolButton><HashLabel>##</HashLabel></ToolButton>
            <Tool icon="taotie" />
            <Tool icon="mask" disabled />
            <Tool icon="up" disabled />
            <Tool icon="down" disabled />
            <Tool icon="butterfly" />
          </ToolRow>
          <TableFrame><DataTable /></TableFrame>
        </MainPane>
        <SideTabs>
          <SideTab $active>表格</SideTab>
          <SideTab>文字</SideTab>
        </SideTabs>
      </Columns>
      <BottomTools><ToolButton /></BottomTools>
    </MainBody>
  </MainWindow>
);

const FilterPane = () => (
  <SplitPane $h={311}>
    <Pane $w={448}>
      <PasteHead>
        <Caption>选择以粘贴</Caption>
        <Spacer />
        <Tool icon="dragon" />
        <Tool icon="mum" />
      </PasteHead>
      <Tree>
        <TreeRows>
          {["JavaScript", "Examples", "Variable"].map((t, i) => (
            <TreeRow key={t} $level={i}><Triangle />{t}</TreeRow>
          ))}
          <TreeRow $level={4}>string</TreeRow>
        </TreeRows>
        <VScroll $w={40}>
          <ArrowSlot $h={32}><Chevron dir="up" /></ArrowSlot>
          <VThumb $h={52} />
          <Spacer />
          <ArrowSlot $h={30} $below={0}><Chevron dir="down" /></ArrowSlot>
        </VScroll>
      </Tree>
    </Pane>
    <Divider $w={18} />
    <Pane>
      <FilterTools>
        <Check on />
        <Icon name="phoenix" scale={0.84} />
        <Tool icon="daisy" />
        <Tool icon="taotie" />
        <Tool icon="history" />
        <Tool icon="leaf" />
      </FilterTools>
      <ChoiceRow>
        <Caption>采纳数据的条件为表达式为空或值等于</Caption>
        <Radio $on />
        <ChoiceLabel>true</ChoiceLabel>
        <Radio />
        <ChoiceLabel>其它</ChoiceLabel>
      </ChoiceRow>
      <Script>{"#{国民总收入(GNI 亿元)} < 900"}</Script>
    </Pane>
  </SplitPane>
);

const StyleDialog = () => (
  <DialogWindow>
    <TitleBar $inactive>
      <Logo><span>My</span><span>Box</span></Logo>
      <TitleText>
        <span>风格</span>
        <TitlePath>{" - CSV - 23 - d:\\tmp\\mybox-data-6.5.5\\data\\ChinaGDP_zh.csv"}</TitlePath>
      </TitleText>
      <WindowButtons color="#999" minColor="#e6e6e6" />
    </TitleBar>
    <DialogBody>
      <SplitPane $h={990}>
        <Pane $w={538}>
          <StyleTools $h={72} $top={0} $left={0}>
            <Tool icon="taotie" />
            <Tool icon="mask" />
            <Spacer />
            <Drop $y={8}><Icon name="phoenix" flip /></Drop>
            <Gap $w={1} />
          </StyleTools>
          <StyleTable />
          <Pager>
            <PagerRow>
              <Caption>页</Caption>
              <Picker value="1" />
              <Caption $after={3.500}>/1</Caption>
              <Tool icon="bird" />
              <Tool icon="left" disabled />
            </PagerRow>
            <PagerRow>
              <Tool icon="right" disabled />
              <Tool icon="first" disabled />
              <Tool icon="last" disabled />
              <Caption>页尺寸</Caption>
            </PagerRow>
            <PagerRow>
              <Picker value="50" />
              <Caption>行: 3/3</Caption>
              <Caption>选中的: 1</Caption>
            </PagerRow>
          </Pager>
        </Pane>
        <Divider $w={18} />
        <Pane>
          <ToolRow $h={72} $top={0} $left={6}>
            <Drop $y={8}><Icon name="phoenix" /></Drop>
            <Gap $w={1} />
            <Drop $y={13}><Icon name="fish" /></Drop>
            <RecordLabel>编号: 19</RecordLabel>
            <Drop $y={10}><Check on /></Drop>
            <Drop $y={12}><Icon name="phoenix" scale={0.84} /></Drop>
            <Gap $w={0} />
            <Tool icon="swirl" disabled />
            <Tool icon="twin" />
            <Tool icon="lotus" />
            <Tool icon="gourd" />
          </ToolRow>
          <TabStrip>
            <Tab $w={99} $active>条件</Tab>
            <Tab $w={99}>风格</Tab>
          </TabStrip>
          <FormArea>
            <Group $h={223}>
              <GroupTitle>数据行号</GroupTitle>
              <FormRow $gap={11}><Caption>从</Caption><Field /><Caption>空、零、或负值表示不限制行号</Caption></FormRow>
              <FormRow $gap={0}><Caption>到</Caption><Field /><Caption>空、零、或负值表示最后一行</Caption></FormRow>
            </Group>
            <Group $h={199}>
              <FormRow $gap={11}>
                <Caption>列</Caption>
                <Tool icon="selectAll" />
                <Tool icon="selectNone" />
                <Caption>不选表示所有列</Caption>
              </FormRow>
              {columnChecks.map((row, i) => (
                <CheckRow key={i}>
                  {row.map((c) => (
                    <CheckItem key={c.label} $w={c.w} $spacing={c.spacing}>
                      <Check on={"on" in c} />
                      <span>{c.label}</span>
                    </CheckItem>
                  ))}
                </CheckRow>
              ))}
            </Group>
            <SectionLabel>行过滤</SectionLabel>
            <FilterPane />
          </FormArea>
        </Pane>
      </SplitPane>
    </DialogBody>
  </DialogWindow>
);

export default function App() {
  return (
    <Desktop>
      <GlobalStyle />
      <Main />
      <StyleDialog />
    </Desktop>
  );
}
